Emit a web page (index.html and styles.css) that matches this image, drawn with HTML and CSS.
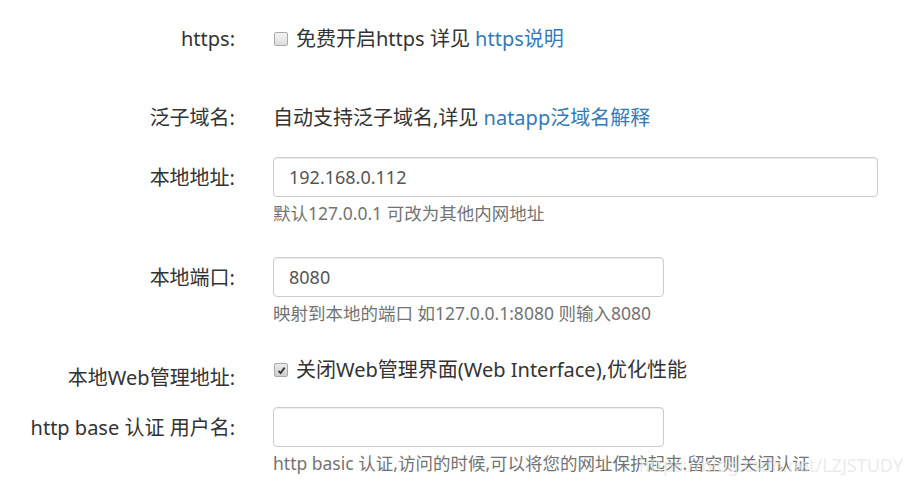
FILE: index.html
```html
<!DOCTYPE html>
<html lang="zh-CN">
<head>
<meta charset="utf-8">
<title>natapp</title>
<link rel="stylesheet" href="styles.css">
</head>
<body>
<form class="form">
  <div class="row row-https">
    <label class="label">https:</label>
    <div class="field">
      <div class="check-line">
        <span class="cb"></span>
        <span>免费开启https 详见 <a class="link" href="#">https说明</a></span>
      </div>
    </div>
  </div>

  <div class="row row-wild">
    <label class="label">泛子域名:</label>
    <div class="field">
      <div class="static">自动支持泛子域名,详见 <a class="link" href="#">natapp泛域名解释</a></div>
    </div>
  </div>

  <div class="row row-input">
    <label class="label label-input">本地地址:</label>
    <div class="field">
      <input class="input input-wide" type="text" value="192.168.0.112">
      <p class="help">默认127.0.0.1 可改为其他内网地址</p>
    </div>
  </div>

  <div class="row row-input row-port">
    <label class="label label-input">本地端口:</label>
    <div class="field">
      <input class="input input-narrow" type="text" value="8080">
      <p class="help">映射到本地的端口 如127.0.0.1:8080 则输入8080</p>
    </div>
  </div>

  <div class="row row-web">
    <label class="label label-web">本地Web管理地址:</label>
    <div class="field">
      <div class="check-line">
        <span class="cb cb-checked">
          <svg width="9" height="9" viewBox="0 0 9 9"><path d="M1.5 4.8 L3.6 7 L7.6 1.6" fill="none" stroke="#333" stroke-width="1.8"/></svg>
        </span>
        <span>关闭Web管理界面(Web Interface),优化性能</span>
      </div>
    </div>
  </div>

  <div class="row row-input row-auth">
    <label class="label label-input">http base 认证 用户名:</label>
    <div class="field">
      <input class="input input-narrow" type="text" value="">
      <p class="help">http basic 认证,访问的时候,可以将您的网址保护起来.留空则关闭认证</p>
    </div>
  </div>
</form>
<div class="watermark">https://blog.csdn.net/LZJSTUDY</div>
</body>
</html>
```

FILE: styles.css
```css
html, body {
  margin: 0;
  padding: 0;
  background: #fff;
}
body {
  font-family: "Noto Sans", "Noto Sans CJK SC", sans-serif;
  font-size: 20px;
  color: #333;
  width: 912px;
  height: 484px;
  overflow: hidden;
  position: relative;
}
.form {
  padding-top: 26px;
}
.row {
  display: grid;
  grid-template-columns: 235px 1fr;
  column-gap: 38px;
  align-items: start;
}
.label {
  text-align: right;
  line-height: 26px;
  white-space: nowrap;
}
.label-input {
  line-height: 40px;
  padding-top: 1px;
}
.label-web {
  padding-top: 8px;
}
.field {
  line-height: 26px;
}
.row-wild {
  margin-top: 53px;
}
.row-input {
  margin-top: 26px;
}
.row-port {
  margin-top: 33px;
}
.row-web {
  margin-top: 33px;
}
.row-auth {
  margin-top: 16px;
}
.check-line {
  display: flex;
  align-items: center;
  gap: 8px;
}
.cb {
  width: 12px;
  height: 12px;
  border: 1px solid #a9a9a9;
  border-radius: 2px;
  background: linear-gradient(#f4f4f4, #dcdcdc);
  margin-left: 1px;
  flex: none;
  display: flex;
  align-items: center;
  justify-content: center;
}
.cb-checked {
  background: linear-gradient(#ececec, #cfcfcf);
}
.link {
  color: #337ab7;
  text-decoration: none;
}
.input {
  display: block;
  box-sizing: border-box;
  height: 40px;
  padding: 0 15px;
  font-family: inherit;
  font-size: 18px;
  color: #555;
  border: 1px solid #ccc;
  border-radius: 4px;
  box-shadow: inset 0 1px 1px rgba(0,0,0,0.075);
  background: #fff;
  margin: 0;
}
.input-wide {
  width: 605px;
}
.input-narrow {
  width: 391px;
}
.help {
  margin: 5px 0 0;
  font-size: 17.5px;
  line-height: 22px;
  color: #737373;
}
.watermark {
  position: absolute;
  right: 9px;
  top: 453px;
  font-family: "Noto Sans", sans-serif;
  font-size: 18px;
  line-height: 24px;
  color: rgba(228, 228, 228, 0.75);
  pointer-events: none;
}
```
